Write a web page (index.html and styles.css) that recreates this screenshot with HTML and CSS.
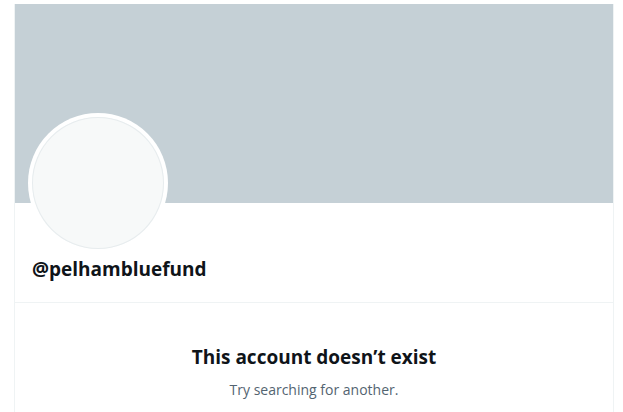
FILE: index.html
```html
<!DOCTYPE html>
<html>
<head>
<meta charset="utf-8">
<link rel="stylesheet" href="styles.css">
</head>
<body>
<main class="column">
  <div class="banner"></div>
  <section class="profile">
    <div class="avatar"><div class="avatar-inner"></div></div>
    <div class="handle">@pelhambluefund</div>
  </section>
  <section class="empty">
    <h1 class="empty-title">This account doesn’t exist</h1>
    <p class="empty-sub">Try searching for another.</p>
  </section>
</main>
</body>
</html>
```
FILE: styles.css
```css
html, body {
  margin: 0;
  padding: 0;
  background: #ffffff;
}
body {
  padding-top: 4px;
  font-family: "Open Sans", "Noto Sans", sans-serif;
  color: #0f1419;
}
.column {
  margin-left: 14px;
  width: 598px;
  min-height: 408px;
  border-left: 1px solid #eff3f4;
  border-right: 1px solid #eff3f4;
}
.banner {
  height: 199px;
  background: #c5d0d6;
}
.profile {
  display: flex;
  flex-direction: column;
  align-items: flex-start;
  padding: 0 13px;
  height: 100px;
  border-bottom: 1px solid #eff3f4;
  box-sizing: border-box;
}
.avatar {
  width: 140px;
  height: 140px;
  margin-top: -90px;
  border-radius: 50%;
  background: #ffffff;
  padding: 4px;
  box-sizing: border-box;
}
.avatar-inner {
  width: 100%;
  height: 100%;
  border-radius: 50%;
  background: #f7f9f9;
  box-shadow: inset 0 0 0 1px #e7ecee;
}
.handle {
  margin-top: 4px;
  margin-left: 4px;
  font-size: 19px;
  font-weight: 700;
  line-height: 24px;
}
.empty {
  text-align: center;
  padding-top: 42px;
}
.empty-title {
  margin: 0;
  font-size: 19px;
  font-weight: 700;
  line-height: 24px;
}
.empty-sub {
  margin: 11px 0 0;
  font-size: 14px;
  line-height: 20px;
  color: #536471;
}
```
